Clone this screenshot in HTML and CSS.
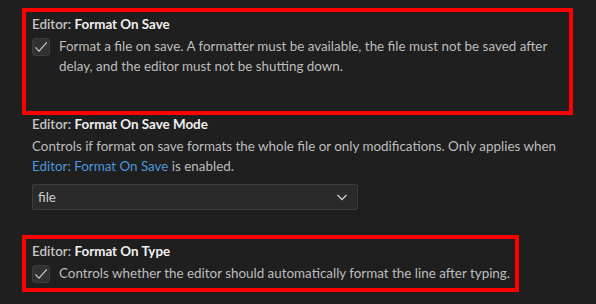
FILE: index.html
```html
<!DOCTYPE html>
<html>
<head>
<meta charset="utf-8">
<link rel="stylesheet" href="styles.css">
</head>
<body>
<div class="settings">
  <section class="setting outlined first">
    <div class="title"><span class="cat">Editor: </span><span class="name">Format On Save</span></div>
    <div class="bool">
      <span class="checkbox"><svg viewBox="0 0 16 16" width="16" height="16"><path d="M2.4 8.4 L6 12.2 L13.8 3.4" fill="none" stroke="#cccccc" stroke-width="1.2"/></svg></span>
      <div class="desc">Format a file on save. A formatter must be available, the file must not be saved after<br>delay, and the editor must not be shutting down.</div>
    </div>
  </section>
  <section class="setting plain">
    <div class="title"><span class="cat">Editor: </span><span class="name">Format On Save Mode</span></div>
    <div class="desc block">Controls if format on save formats the whole file or only modifications. Only applies when<br><a class="link">Editor: Format On Save</a> is enabled.</div>
    <div class="select">
      <span>file</span>
      <svg viewBox="0 0 16 16" width="16" height="16"><path d="M3.5 6 L8 10.5 L12.5 6" fill="none" stroke="#cccccc" stroke-width="1.3"/></svg>
    </div>
  </section>
  <section class="setting outlined second">
    <div class="title"><span class="cat">Editor: </span><span class="name">Format On Type</span></div>
    <div class="bool">
      <span class="checkbox"><svg viewBox="0 0 16 16" width="16" height="16"><path d="M2.4 8.4 L6 12.2 L13.8 3.4" fill="none" stroke="#cccccc" stroke-width="1.2"/></svg></span>
      <div class="desc">Controls whether the editor should automatically format the line after typing.</div>
    </div>
  </section>
</div>
</body>
</html>
```
FILE: styles.css
```css
html, body {
  margin: 0;
  padding: 0;
  background: #1f1f1f;
  width: 596px;
  height: 304px;
  overflow: hidden;
}
body {
  font-family: Lato, "Open Sans", sans-serif;
  font-size: 13.4px;
  color: #cccccc;
}
.settings {
  padding-top: 8px;
  display: flex;
  flex-direction: column;
}
.setting {
  margin-left: 22px;
  box-sizing: border-box;
}
.outlined {
  border: 4px solid #ff0000;
  padding: 3px 6px 4px 6px;
}
.first {
  width: 551px;
  height: 107px;
}
.second {
  width: 497px;
  height: 57px;
  margin-top: 25px;
}
.plain {
  padding: 0 10px;
}
.title {
  line-height: 18px;
  height: 18px;
  white-space: nowrap;
}
.cat {
  color: #c5c5c5;
  font-weight: 600;
}
.name {
  color: #f0f0f0;
  font-weight: 700;
}
.bool {
  display: flex;
  align-items: flex-start;
  gap: 9px;
  margin-top: 5px;
}
.checkbox {
  width: 18px;
  height: 18px;
  box-sizing: border-box;
  flex: none;
  background: #313131;
  border: 1px solid #3c3c3c;
  border-radius: 3px;
  display: flex;
  align-items: center;
  justify-content: center;
}
.checkbox svg { display: block; }
.desc {
  color: #bdbdbd;
  line-height: 19.5px;
  white-space: nowrap;
  margin-top: -1px;
}
.desc.block {
  margin-top: 4px;
}
.link {
  color: #4e94dc;
}
.select {
  margin-top: 8px;
  width: 326px;
  height: 26px;
  box-sizing: border-box;
  background: #2a2a2a;
  border: 1px solid #3c3c3c;
  border-radius: 2px;
  display: flex;
  align-items: center;
  justify-content: space-between;
  padding: 0 7px 0 5px;
  color: #d0d0d0;
}
.select svg { display: block; }
```
